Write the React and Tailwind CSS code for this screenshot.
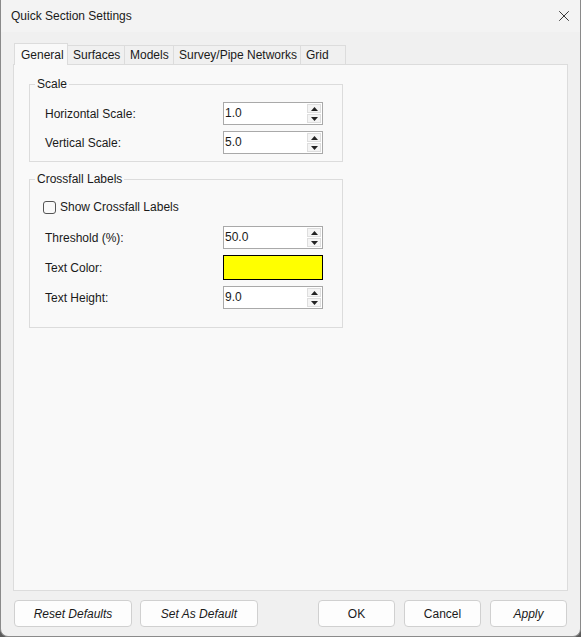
import { X } from 'lucide-react';

const font = { fontFamily: '"Liberation Sans", Arial, sans-serif' };

const tabs = [
  { name: 'General', w: 'w-[54px]' },
  { name: 'Surfaces', w: 'w-[57px]' },
  { name: 'Models', w: 'w-[49px]' },
  { name: 'Survey/Pipe Networks', w: 'w-[127px]' },
  { name: 'Grid', w: 'w-[45px]' },
];

function Spinner({ value }) {
  return (
    <div className="flex h-[23px] w-[100px] border border-[#a9a9a9] bg-white">
      <div className="flex-1 pl-[1px] leading-[20px] text-[12px] text-[#1a1a1a]">{value}</div>
      <div className="flex w-[16px] flex-col gap-[1px] p-[1px]">
        <div className="flex flex-1 items-center justify-center border border-[#dedede] bg-[#f4f4f4]">
          <svg width="7" height="4" viewBox="0 0 7 4"><path d="M0 4 L3.5 0 L7 4Z" fill="#222" /></svg>
        </div>
        <div className="flex flex-1 items-center justify-center border border-[#dedede] bg-[#f4f4f4]">
          <svg width="7" height="4" viewBox="0 0 7 4"><path d="M0 0 L3.5 4 L7 0Z" fill="#222" /></svg>
        </div>
      </div>
    </div>
  );
}

function Row({ label, children }) {
  return (
    <div className="flex items-center">
      <span className="w-[178px] text-[12px] text-[#1a1a1a]">{label}</span>
      {children}
    </div>
  );
}

function Group({ title, children, className }) {
  return (
    <fieldset className={`w-[314px] border border-[#dcdcdc] px-[15px] ${className}`}>
      <legend className="-ml-[10px] px-[2px] text-[12px] text-[#1a1a1a]">{title}</legend>
      {children}
    </fieldset>
  );
}

function Btn({ children, italic, w }) {
  return (
    <button className={`h-[27px] ${w} rounded-[4px] border border-[#d0d0d0] bg-[#fdfdfd] text-[12px] text-[#1a1a1a] ${italic ? 'italic' : ''}`}>
      {children}
    </button>
  );
}

export default function App() {
  return (
    <div className="h-[637px] w-[581px] bg-[#5a5a5a]" style={font}>
      <div className="flex h-full w-full flex-col overflow-hidden rounded-b-[8px] border-l border-r border-b border-[#8a8a8a] bg-[#f0f0f0]">
        {/* Title bar */}
        <div className="flex h-[32px] shrink-0 items-center justify-between bg-[#f3f3f3] pl-[10px] pr-[7px]">
          <span className="text-[12px] text-[#1a1a1a]">Quick Section Settings</span>
          <X size={18} strokeWidth={1.2} className="text-[#222]" />
        </div>

        <div className="flex flex-1 flex-col px-[12px] pt-[11px]">
          {/* Tabs */}
          <div className="flex h-[21px] items-end pl-[1px]">
            {tabs.map((t, i) => (
              <div
                key={t.name}
                className={
                  i === 0
                    ? `relative z-10 -mb-[1px] flex h-[22px] ${t.w} items-center border border-b-0 border-[#dcdcdc] bg-[#f9f9f9] pl-[6px] text-[12px] text-[#1a1a1a]`
                    : `flex h-[19px] ${t.w} items-center border border-l-0 border-b-0 border-[#dcdcdc] bg-[#f0f0f0] pl-[5px] text-[12px] text-[#1a1a1a]`
                }
              >
                {t.name}
              </div>
            ))}
          </div>

          {/* Panel */}
          <div className="flex h-[527px] flex-col gap-[8px] border border-[#dcdcdc] bg-[#f9f9f9] pl-[15px] pt-[10px]">
            <Group title="Scale" className="pb-[7px] pt-[9px]">
              <div className="flex flex-col gap-[6px]">
                <Row label="Horizontal Scale:"><Spinner value="1.0" /></Row>
                <Row label="Vertical Scale:"><Spinner value="5.0" /></Row>
              </div>
            </Group>

            <Group title="Crossfall Labels" className="pb-[18px] pt-[10px]">
              <label className="flex items-center gap-[4px]">
                <span className="-ml-[2px] h-[13px] w-[13px] rounded-[3px] border border-[#555] bg-[#f9f9f9]" />
                <span className="text-[12px] text-[#1a1a1a]">Show Crossfall Labels</span>
              </label>
              <div className="mt-[10px] flex flex-col gap-[6px]">
                <Row label="Threshold (%):"><Spinner value="50.0" /></Row>
                <Row label="Text Color:">
                  <div className="h-[25px] w-[100px] border border-black bg-[#ffff00]" />
                </Row>
                <Row label="Text Height:"><Spinner value="9.0" /></Row>
              </div>
            </Group>
          </div>

          {/* Buttons */}
          <div className="flex items-start pl-[1px] pt-[9px]">
            <div className="flex gap-[8px]">
              <Btn italic w="w-[118px]">Reset Defaults</Btn>
              <Btn italic w="w-[118px]">Set As Default</Btn>
            </div>
            <div className="ml-auto flex gap-[9px] pr-[1px]">
              <Btn w="w-[77px]">OK</Btn>
              <Btn w="w-[77px]">Cancel</Btn>
              <Btn italic w="w-[77px]">Apply</Btn>
            </div>
          </div>
        </div>
      </div>
    </div>
  );
}
